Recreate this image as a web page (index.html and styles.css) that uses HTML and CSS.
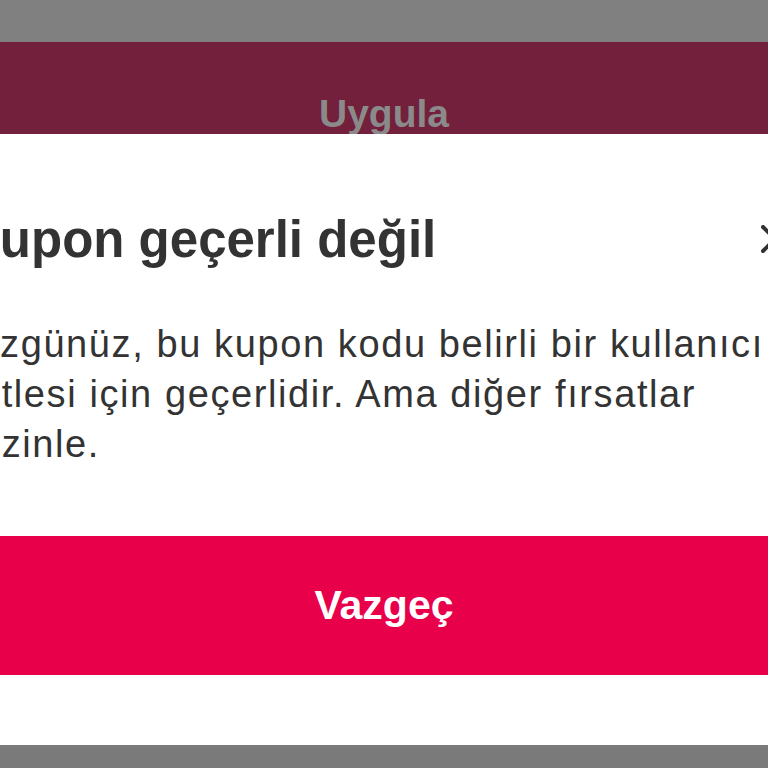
FILE: index.html
```html
<!DOCTYPE html>
<html lang="tr">
<head>
<meta charset="utf-8">
<link rel="stylesheet" href="styles.css">
</head>
<body>
<div class="screen">
  <div class="top-gray"></div>
  <div class="apply-bar"><span class="apply-text">Uygula</span></div>
  <div class="sheet">
    <div class="title-row">
      <h1 class="title">Kupon geçerli değil</h1>
      <svg class="close" width="28" height="28" viewBox="0 0 28 28" aria-label="Kapat">
        <path d="M2 2 L26 26 M26 2 L2 26" stroke="#333" stroke-width="4" stroke-linecap="round" fill="none"/>
      </svg>
    </div>
    <p class="message">Üzgünüz, bu kupon kodu belirli bir kullanıcı<br>kitlesi için geçerlidir. Ama diğer fırsatlar<br>sizinle.</p>
    <div class="cancel-btn">Vazgeç</div>
  </div>
  <div class="bottom-gray"></div>
</div>
</body>
</html>
```

FILE: styles.css
```css
html, body {
  margin: 0;
  padding: 0;
}
body {
  width: 768px;
  height: 768px;
  overflow: hidden;
  background: #7b7b7b;
  font-family: "Liberation Sans", Arial, sans-serif;
}
.screen {
  width: 768px;
  height: 768px;
  overflow: hidden;
  display: flex;
  flex-direction: column;
}
.top-gray {
  height: 42px;
  flex: none;
  background: #808080;
}
.apply-bar {
  height: 92px;
  flex: none;
  background: #72203b;
  overflow: hidden;
  display: flex;
  justify-content: center;
  padding-top: 50px;
  box-sizing: border-box;
}
.apply-text {
  color: #8b8a8b;
  font-weight: bold;
  font-size: 39px;
  line-height: 44px;
}
.sheet {
  flex: none;
  height: 611px;
  width: 824px;
  margin: 0 -28px;
  background: #ffffff;
  box-sizing: border-box;
  padding-top: 76px;
  display: flex;
  flex-direction: column;
}
.title-row {
  display: flex;
  justify-content: space-between;
  align-items: flex-start;
  height: 60px;
  padding-right: 7px;
}
.title {
  margin: 0 0 0 -9px;
  font-size: 51px;
  line-height: 60px;
  font-weight: bold;
  color: #333333;
  white-space: nowrap;
}
.close {
  margin-top: 15px;
  flex: none;
}
.message {
  margin: 49px 0 0 -1px;
  font-size: 38px;
  letter-spacing: 1.6px;
  line-height: 50px;
  color: #333333;
  white-space: nowrap;
}
.cancel-btn {
  margin-top: 67px;
  height: 139px;
  background: #e8004b;
  color: #ffffff;
  font-weight: bold;
  font-size: 41px;
  display: flex;
  align-items: center;
  justify-content: center;
}
.bottom-gray {
  flex: 1;
  background: #7a7a7a;
}
```
